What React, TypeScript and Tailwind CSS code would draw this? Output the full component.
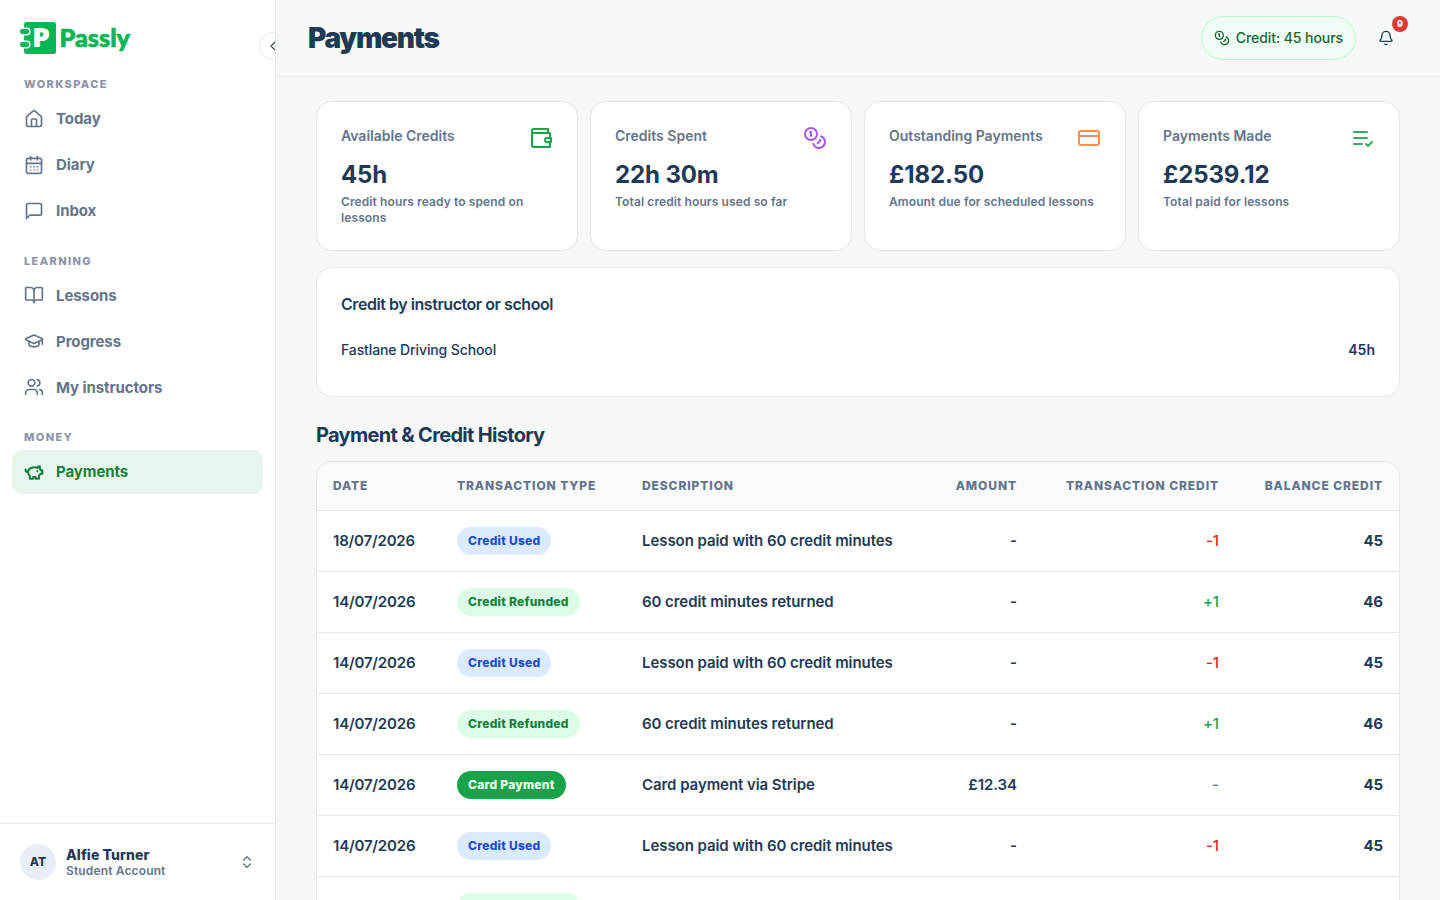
import {
    Bell,
    BookOpen,
    CalendarDays,
    ChevronLeft,
    ChevronsUpDown,
    Coins,
    CreditCard,
    GraduationCap,
    House,
    Users,
} from 'lucide-react'
import type { ReactNode } from 'react'

interface IconProps {
    className?: string
    paths: string[]
    strokeWidth?: number
}

function StrokeIcon({ className, paths, strokeWidth = 2 }: IconProps) {
    return (
        <svg
            className={className}
            viewBox="0 0 24 24"
            fill="none"
            stroke="currentColor"
            strokeWidth={strokeWidth}
            strokeLinecap="round"
            strokeLinejoin="round"
        >
            {paths.map((d) => (
                <path key={d} d={d} />
            ))}
        </svg>
    )
}

const messagePaths = [
    'M21 15a2 2 0 0 1-2 2H7l-4 4V5a2 2 0 0 1 2-2h14a2 2 0 0 1 2 2z',
]
const piggyPaths = [
    'M19 5c-1.5 0-2.8 1.4-3 2-3.5-1.5-11-.3-11 5 0 1.8 0 3 2 4.5V20h4v-2h3v2h4v-4c1-.5 1.7-1 2-2h2v-4h-2c0-1-.5-1.5-1-2V5z',
    'M2 9v1c0 1.1.9 2 2 2h1',
    'M16 11h.01',
]
const walletPaths = [
    'M21 12V7H5a2 2 0 0 1 0-4h14v4',
    'M3 5v14a2 2 0 0 0 2 2h16v-5',
    'M18 12a2 2 0 0 0 0 4h4v-4Z',
]
const listCheckPaths = ['M11 18H3', 'm15 18 2 2 4-4', 'M16 12H3', 'M16 6H3']

const navGroups: {
    label: string
    items: { name: string; icon: ReactNode; active?: boolean }[]
}[] = [
    {
        label: 'Workspace',
        items: [
            { name: 'Today', icon: <House size={20} /> },
            { name: 'Diary', icon: <CalendarDays size={20} /> },
            {
                name: 'Inbox',
                icon: <StrokeIcon className="size-5" paths={messagePaths} />,
            },
        ],
    },
    {
        label: 'Learning',
        items: [
            { name: 'Lessons', icon: <BookOpen size={20} /> },
            { name: 'Progress', icon: <GraduationCap size={20} /> },
            { name: 'My instructors', icon: <Users size={20} /> },
        ],
    },
    {
        label: 'Money',
        items: [
            {
                name: 'Payments',
                icon: (
                    <StrokeIcon
                        className="size-5"
                        paths={piggyPaths}
                        strokeWidth={2.5}
                    />
                ),
                active: true,
            },
        ],
    },
]

const stats = [
    {
        title: 'Available Credits',
        value: '45h',
        note: 'Credit hours ready to spend on lessons',
        icon: (
            <StrokeIcon
                className="size-6 text-[#16a34a]"
                paths={walletPaths}
            />
        ),
    },
    {
        title: 'Credits Spent',
        value: '22h 30m',
        note: 'Total credit hours used so far',
        icon: <Coins className="size-6 text-[#a855f7]" />,
    },
    {
        title: 'Outstanding Payments',
        value: '£182.50',
        note: 'Amount due for scheduled lessons',
        icon: <CreditCard className="size-6 text-[#f0924a]" />,
    },
    {
        title: 'Payments Made',
        value: '£2539.12',
        note: 'Total paid for lessons',
        icon: (
            <StrokeIcon
                className="size-6 text-[#2fae60]"
                paths={listCheckPaths}
            />
        ),
    },
]

const badgeStyles = {
    'Credit Used': 'bg-[#dbeafe] text-[#1d4ed8]',
    'Credit Refunded': 'bg-[#dcfce7] text-[#15803d]',
    'Card Payment': 'bg-[#16a34a] text-white',
}

type TransactionType = keyof typeof badgeStyles

interface Transaction {
    date: string
    type: TransactionType
    description: string
    amount: string
    credit: string
    balance: string
}

function creditUsed(date: string): Transaction {
    return {
        date,
        type: 'Credit Used',
        description: 'Lesson paid with 60 credit minutes',
        amount: '-',
        credit: '-1',
        balance: '45',
    }
}

function creditRefunded(date: string): Transaction {
    return {
        date,
        type: 'Credit Refunded',
        description: '60 credit minutes returned',
        amount: '-',
        credit: '+1',
        balance: '46',
    }
}

const transactions: Transaction[] = [
    creditUsed('18/07/2026'),
    creditRefunded('14/07/2026'),
    creditUsed('14/07/2026'),
    creditRefunded('14/07/2026'),
    {
        date: '14/07/2026',
        type: 'Card Payment',
        description: 'Card payment via Stripe',
        amount: '£12.34',
        credit: '-',
        balance: '45',
    },
    creditUsed('14/07/2026'),
    creditRefunded('14/07/2026'),
]

function creditColor(credit: string) {
    if (credit === '-') return 'text-[#64748b]'
    return credit.startsWith('+') ? 'text-[#16a34a]' : 'text-[#dc2626]'
}

function Logo() {
    return (
        <svg
            className="block h-8 w-28 overflow-visible"
            viewBox="0 0 112 32"
            role="img"
            aria-label="Passly"
        >
            <rect x="4" y="0" width="32" height="32" rx="2.5" fill="#06b656" />
            <g stroke="#fff" strokeWidth="1.4" fill="#06b656">
                <rect x="-0.7" y="6.3" width="10.6" height="6.4" rx="3.2" />
                <rect x="-0.7" y="19.3" width="10.6" height="6.4" rx="3.2" />
            </g>
            <text
                x="12"
                y="25.4"
                textLength="18"
                lengthAdjust="spacingAndGlyphs"
                className="font-['Open_Sans',sans-serif] text-[27px] font-extrabold"
                fill="#fff"
            >
                P
            </text>
            <text
                x="39.5"
                y="25"
                textLength="70.5"
                lengthAdjust="spacingAndGlyphs"
                className="font-['Lato',sans-serif] text-[25px] font-black"
                fill="#06b656"
                stroke="#06b656"
                strokeWidth="0.7"
                strokeLinejoin="round"
            >
                Passly
            </text>
        </svg>
    )
}

function Sidebar() {
    return (
        <aside className="relative flex w-[276px] shrink-0 flex-col overflow-hidden border-r border-[#e2e8e6] bg-white">
            <div className="px-5 pt-[22px]">
                <Logo />
            </div>
            <button className="absolute top-8 left-[259px] flex size-7 items-center justify-center rounded-full border border-[#e2e8f0] bg-white text-[#475569]">
                <ChevronLeft size={16} />
            </button>
            <nav className="mt-[22px] flex flex-1 flex-col gap-5 px-3">
                {navGroups.map((group) => (
                    <div key={group.label}>
                        <h2 className="mb-1 px-3 text-[11px] leading-[16.5px] font-extrabold tracking-[0.125em] text-[#8a94a8] uppercase">
                            {group.label}
                        </h2>
                        <div className="flex flex-col gap-0.5">
                            {group.items.map((item) => (
                                <a
                                    key={item.name}
                                    className={`flex h-11 items-center gap-3 rounded-[10px] px-3 text-[15px] font-bold tracking-[-0.005em] ${
                                        item.active
                                            ? 'bg-[#e6f6ed] text-[#15803d]'
                                            : 'text-[#64748b]'
                                    }`}
                                >
                                    {item.icon}
                                    <span className="pt-[1.8px]">
                                        {item.name}
                                    </span>
                                </a>
                            ))}
                        </div>
                    </div>
                ))}
            </nav>
            <div className="flex h-[77px] items-center border-t border-[#e2e8e8] px-5">
                <div className="flex size-9 items-center justify-center rounded-full bg-[#e9eef6] text-xs font-extrabold">
                    AT
                </div>
                <div className="ml-2.5 flex-1 pt-0.5">
                    <p className="text-sm leading-4 font-extrabold tracking-[0.005em]">
                        Alfie Turner
                    </p>
                    <p className="text-xs leading-4 font-semibold tracking-[0.012em] text-[#64748b]">
                        Student Account
                    </p>
                </div>
                <ChevronsUpDown size={16} className="text-[#64748b]" />
            </div>
        </aside>
    )
}

function Header() {
    return (
        <header className="flex h-[77px] shrink-0 items-center border-b border-[#e5eae9] px-8">
            <h1 className="flex-1 text-[28px] font-black tracking-[-0.045em]">
                Payments
            </h1>
            <div className="flex h-11 items-center gap-1.5 rounded-full border border-[#bbf7d0] bg-[#f0fdf4] px-3 text-sm font-medium tracking-[-0.005em] text-[#166534]">
                <Coins size={16} />
                Credit: 45 hours
            </div>
            <button className="relative ml-2 flex size-11 items-center justify-center">
                <Bell size={16} />
                <span className="absolute top-0 right-0 flex size-4 items-center justify-center rounded-full bg-[#dc3a32] text-[9px] font-extrabold text-white">
                    9
                </span>
            </button>
        </header>
    )
}

function StatCards() {
    return (
        <div className="grid grid-cols-4 gap-3">
            {stats.map((stat) => (
                <div
                    key={stat.title}
                    className="h-[150px] rounded-2xl border border-[#e3e9e8] bg-white p-6"
                >
                    <div className="flex items-start justify-between">
                        <h3 className="text-sm font-semibold text-[#64748b]">
                            {stat.title}
                        </h3>
                        {stat.icon}
                    </div>
                    <p className="mt-[9px] text-2xl leading-8 font-bold tracking-[-0.005em]">
                        {stat.value}
                    </p>
                    <p className="mt-[3px] text-xs leading-4 font-semibold tracking-[0.009em] text-[#64748b]">
                        {stat.note}
                    </p>
                </div>
            ))}
        </div>
    )
}

function HistoryTable() {
    return (
        <div className="overflow-hidden rounded-t-2xl border border-b-0 border-[#e2e8e8] bg-white">
            <table className="w-full table-fixed text-left text-[15px]">
                <colgroup>
                    <col className="w-[124px]" />
                    <col className="w-[185px]" />
                    <col className="w-[300px]" />
                    <col className="w-[107px]" />
                    <col className="w-[202px]" />
                    <col className="w-[164px]" />
                </colgroup>
                <thead className="bg-[#f8fafc] text-xs tracking-[0.075em] text-[#64748b] uppercase">
                    <tr className="h-12 border-b border-[#e2e8e8]">
                        <th className="px-4 font-extrabold">Date</th>
                        <th className="px-4 font-extrabold whitespace-nowrap">
                            Transaction Type
                        </th>
                        <th className="px-4 font-extrabold">Description</th>
                        <th className="px-4 text-right font-extrabold">
                            Amount
                        </th>
                        <th className="px-4 text-right font-extrabold">
                            Transaction Credit
                        </th>
                        <th className="px-4 text-right font-extrabold whitespace-nowrap">
                            Balance Credit
                        </th>
                    </tr>
                </thead>
                <tbody>
                    {transactions.map((row, index) => (
                        <tr
                            key={index}
                            className="h-[61px] border-b border-[#e2e8e8] font-semibold tracking-[-0.004em]"
                        >
                            <td className="px-4 pt-0.5 tracking-[-0.012em]">
                                {row.date}
                            </td>
                            <td className="px-4">
                                <span
                                    className={`inline-flex h-7 items-center rounded-full px-[11px] align-middle text-xs font-extrabold tracking-[0.022em] ${badgeStyles[row.type]}`}
                                >
                                    {row.type}
                                </span>
                            </td>
                            <td className="px-4 pt-0.5">{row.description}</td>
                            <td className="px-4 pt-0.5 text-right">
                                {row.amount}
                            </td>
                            <td
                                className={`px-4 pt-0.5 text-right font-medium ${creditColor(row.credit)}`}
                            >
                                {row.credit}
                            </td>
                            <td className="px-4 pt-0.5 text-right font-bold">
                                {row.balance}
                            </td>
                        </tr>
                    ))}
                </tbody>
            </table>
        </div>
    )
}

export default function App() {
    return (
        <div className="flex h-screen overflow-hidden bg-[#f6f8f7] font-['Inter','Liberation_Sans',sans-serif] text-[#1e3a56]">
            <Sidebar />
            <main className="flex min-w-0 flex-1 flex-col">
                <Header />
                <div className="flex-1 overflow-hidden px-10 pt-6">
                    <StatCards />
                    <section className="mt-4 h-[130px] rounded-2xl border border-[#e3e9e8] bg-white p-6">
                        <h2 className="text-base font-semibold tracking-[-0.028em]">
                            Credit by instructor or school
                        </h2>
                        <div className="mt-6 flex justify-between text-sm">
                            <span className="font-medium tracking-[-0.008em]">
                                Fastlane Driving School
                            </span>
                            <span className="font-semibold">45h</span>
                        </div>
                    </section>
                    <h2 className="mt-6 mb-3 text-xl font-bold tracking-[-0.034em]">
                        Payment &amp; Credit History
                    </h2>
                    <HistoryTable />
                </div>
            </main>
        </div>
    )
}
